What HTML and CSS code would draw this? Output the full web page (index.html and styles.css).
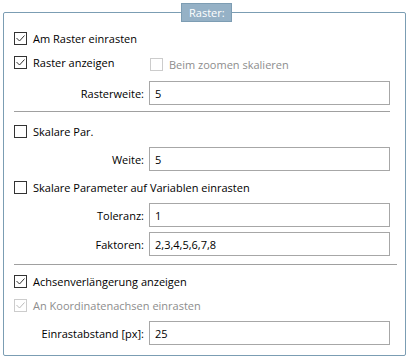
FILE: index.html
```html
<!DOCTYPE html>
<html lang="de">
<head>
  <meta charset="UTF-8">
  <title>Raster</title>
  <link rel="stylesheet" href="styles.css">
</head>
<body>
  <fieldset class="group">
    <legend class="group-title">Raster:</legend>

    <!-- Raster -->
    <div class="section">
      <label class="check">
        <span class="box"><svg viewBox="0 0 11 11"><path d="M1.5 5 L4.5 8 L9.5 2.5"/></svg></span>
        Am Raster einrasten
      </label>
      <div class="check-line">
        <label class="check">
          <span class="box"><svg viewBox="0 0 11 11"><path d="M1.5 5 L4.5 8 L9.5 2.5"/></svg></span>
          Raster anzeigen
        </label>
        <label class="check disabled second">
          <span class="box"></span>
          Beim zoomen skalieren
        </label>
      </div>
      <div class="field">
        <label>Rasterweite:</label>
        <input type="text" class="text" value="5">
      </div>
    </div>

    <div class="sep"></div>

    <!-- Skalare Parameter -->
    <div class="section">
      <label class="check">
        <span class="box"></span>
        Skalare Par.
      </label>
      <div class="field">
        <label>Weite:</label>
        <input type="text" class="text" value="5">
      </div>
      <label class="check">
        <span class="box"></span>
        Skalare Parameter auf Variablen einrasten
      </label>
      <div class="field">
        <label>Toleranz:</label>
        <input type="text" class="text" value="1">
      </div>
      <div class="field">
        <label>Faktoren:</label>
        <input type="text" class="text" value="2,3,4,5,6,7,8">
      </div>
    </div>

    <div class="sep wide"></div>

    <!-- Achsen -->
    <div class="section">
      <label class="check">
        <span class="box"><svg viewBox="0 0 11 11"><path d="M1.5 5 L4.5 8 L9.5 2.5"/></svg></span>
        Achsenverlängerung anzeigen
      </label>
      <label class="check disabled">
        <span class="box"><svg viewBox="0 0 11 11"><path d="M1.5 5 L4.5 8 L9.5 2.5"/></svg></span>
        An Koordinatenachsen einrasten
      </label>
      <div class="field">
        <label>Einrastabstand [px]:</label>
        <input type="text" class="text" value="25">
      </div>
    </div>
  </fieldset>
</body>
</html>
```

FILE: styles.css
```css
/* Global */
body {
  margin: 0;
  padding: 3px 4px 0 3px;
  background: #fff;
  font-family: 'Open Sans', sans-serif;
  font-size: 11px;
  color: #000;
}

/* Group box */
.group {
  margin: 0;
  padding: 5px 15px 10px 10px;
  border: 1px solid #7b9db3;
  border-radius: 2px;
  min-inline-size: 0;
}
.group-title {
  margin-left: 167px;
  padding: 0 6px 0 7px;
  height: 19px;
  box-sizing: border-box;
  line-height: 17px;
  background: #95b1c6;
  border: 1px solid #7d9db3;
  color: #fff;
}

.section {
  display: flex;
  flex-direction: column;
}

/* Checkboxes */
.check {
  height: 22px;
  display: flex;
  align-items: center;
  gap: 6px;
  white-space: nowrap;
}
.box {
  width: 13px;
  height: 13px;
  box-sizing: border-box;
  border: 1px solid #333;
  background: #fff;
  display: flex;
  flex: none;
}
.box svg {
  width: 11px;
  height: 11px;
  fill: none;
  stroke: #333;
  stroke-width: 1;
}
.check.disabled {
  color: #8d8d8d;
}
.check.disabled .box {
  border-color: #cccccc;
}
.check.disabled .box svg {
  stroke: #bcbcbc;
}
.check-line {
  display: grid;
  grid-template-columns: 135px 241px;
}
.check.second {
  margin-left: 1px;
}

/* Label + text field */
.field {
  display: grid;
  grid-template-columns: 130px 241px;
  column-gap: 5px;
  align-items: center;
}
.field label {
  text-align: right;
}
.text {
  height: 24px;
  box-sizing: border-box;
  margin: 0;
  padding: 0 5px;
  border: 1px solid #a7a7a7;
  font-family: inherit;
  font-size: 11px;
  color: #000;
  outline: none;
}

/* spacing */
.check + .check,
.check-line { margin-top: 2px; }
.check + .field { margin-top: 5px; }
.check-line + .field { margin-top: 6px; }
.field + .check,
.field + .field { margin-top: 5px; }

.sep {
  border-top: 1px solid #a0a0a0;
  margin: 6px 0 8px;
}
.sep.wide {
  margin: 8px -7px 5px 0;
}
```
